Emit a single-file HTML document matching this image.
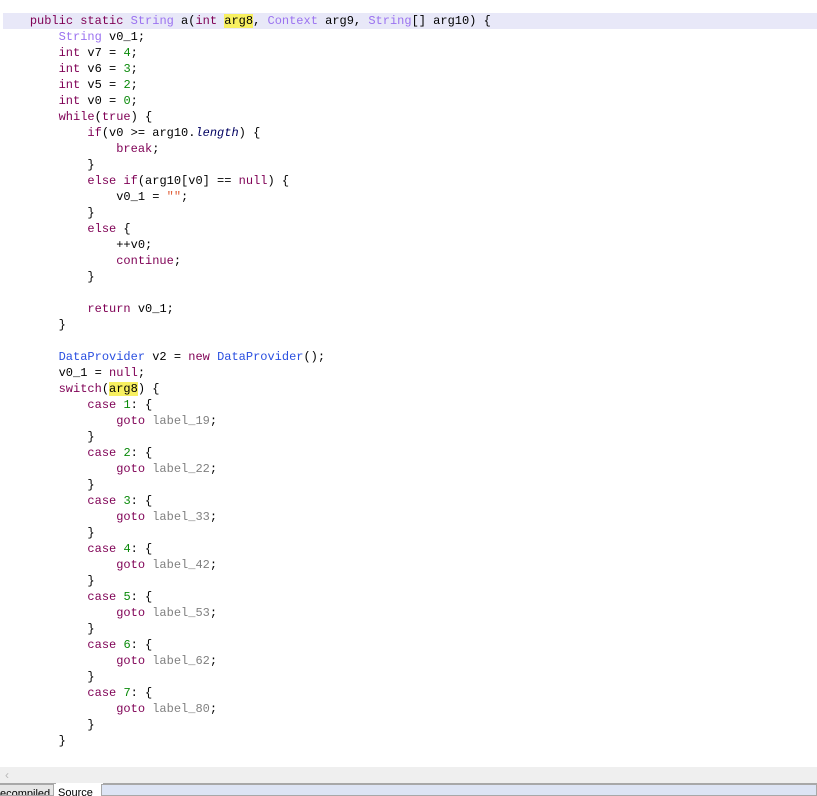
<!DOCTYPE html>
<html><head><meta charset="utf-8"><style>
html,body{margin:0;padding:0;width:817px;height:795px;overflow:hidden;background:#fff;}
pre{position:absolute;left:1px;top:13px;margin:0;font:12px/16px "Liberation Mono",monospace;color:#000;}
.hl{position:absolute;left:3px;top:13px;width:814px;height:16px;background:#e8e8f8;}
.k{color:#7f0055}.t{color:#9b72f0}.c{color:#2a4fe0}.n{color:#0a8a0a}.s{color:#e0603a}.l{color:#808080}.i{font-style:italic;color:#000060}
.y{background:#f8f060}
.strip{position:absolute;left:0;top:767px;width:817px;height:16px;background:#efefef;color:#b8b8b8;font:12px "Liberation Sans",sans-serif;}
.tabs{position:absolute;left:0;top:783px;width:817px;height:12px;border-top:1px solid #a8a8a8;box-sizing:border-box;background:#fff;font:11px "Liberation Sans",sans-serif;}
</style></head><body>
<div class="hl"></div>
<pre>    <span class="k">public static</span> <span class="t">String</span> a(<span class="k">int</span> <span class="y">arg8</span>, <span class="t">Context</span> arg9, <span class="t">String</span>[] arg10) {
        <span class="t">String</span> v0_1;
        <span class="k">int</span> v7 = <span class="n">4</span>;
        <span class="k">int</span> v6 = <span class="n">3</span>;
        <span class="k">int</span> v5 = <span class="n">2</span>;
        <span class="k">int</span> v0 = <span class="n">0</span>;
        <span class="k">while</span>(<span class="k">true</span>) {
            <span class="k">if</span>(v0 &gt;= arg10.<span class="i">length</span>) {
                <span class="k">break</span>;
            }
            <span class="k">else if</span>(arg10[v0] == <span class="k">null</span>) {
                v0_1 = <span class="s">""</span>;
            }
            <span class="k">else</span> {
                ++v0;
                <span class="k">continue</span>;
            }

            <span class="k">return</span> v0_1;
        }

        <span class="c">DataProvider</span> v2 = <span class="k">new</span> <span class="c">DataProvider</span>();
        v0_1 = <span class="k">null</span>;
        <span class="k">switch</span>(<span class="y">arg8</span>) {
            <span class="k">case</span> <span class="n">1</span>: {
                <span class="k">goto</span> <span class="l">label_19</span>;
            }
            <span class="k">case</span> <span class="n">2</span>: {
                <span class="k">goto</span> <span class="l">label_22</span>;
            }
            <span class="k">case</span> <span class="n">3</span>: {
                <span class="k">goto</span> <span class="l">label_33</span>;
            }
            <span class="k">case</span> <span class="n">4</span>: {
                <span class="k">goto</span> <span class="l">label_42</span>;
            }
            <span class="k">case</span> <span class="n">5</span>: {
                <span class="k">goto</span> <span class="l">label_53</span>;
            }
            <span class="k">case</span> <span class="n">6</span>: {
                <span class="k">goto</span> <span class="l">label_62</span>;
            }
            <span class="k">case</span> <span class="n">7</span>: {
                <span class="k">goto</span> <span class="l">label_80</span>;
            }
        }</pre>
<div class="strip"><span style="position:absolute;left:5px;top:0;line-height:16px">&lsaquo;</span></div>
<div class="tabs">
<div style="position:absolute;left:-1px;top:0;width:55px;height:12px;background:#e6e6e6;border:1px solid #a8a8a8;box-sizing:border-box;overflow:hidden;line-height:18px;padding-left:0">ecompiled</div>
<div style="position:absolute;left:56px;top:-1px;width:45px;height:13px;background:#fff;overflow:hidden;line-height:20px;padding-left:2px">Source</div>
<div style="position:absolute;left:101px;top:0;width:716px;height:12px;background:#dde4f4;border:1px solid #a8a8a8;box-sizing:border-box"></div>
</div>
</body></html>
